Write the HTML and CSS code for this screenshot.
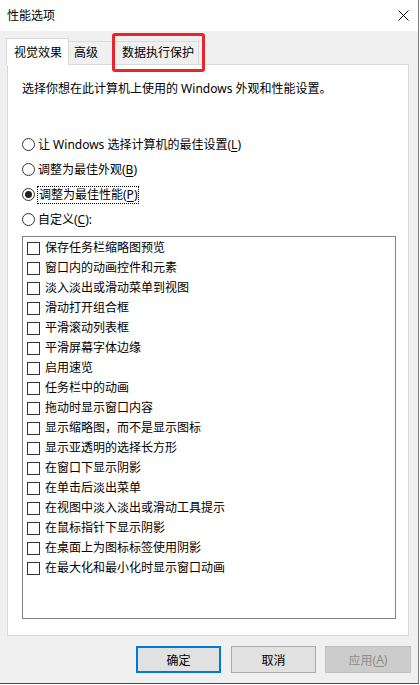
FILE: index.html
```html
<!DOCTYPE html>
<html lang="zh-CN">
<head>
<meta charset="utf-8">
<title>性能选项</title>
<link rel="stylesheet" href="styles.css">
</head>
<body>
<div class="window">
  <div class="titlebar">
    <span class="title">性能选项</span>
    <span class="close">
      <svg width="11" height="11" viewBox="0 0 11 11"><path d="M0.5 0.5 L10.5 10.5 M10.5 0.5 L0.5 10.5" stroke="#000" stroke-width="1" fill="none"/></svg>
    </span>
  </div>
  <div class="main">
    <div class="tabs">
      <div class="tab active">视觉效果</div>
      <div class="tab second">高级</div>
      <div class="tab third">数据执行保护<span class="highlight"></span></div>
    </div>
    <div class="panel">
      <p class="desc">选择你想在此计算机上使用的 Windows 外观和性能设置。</p>
      <div class="radios">
        <div class="radio-row"><span class="radio"></span><span class="label">让 Windows 选择计算机的最佳设置(<u>L</u>)</span></div>
        <div class="radio-row"><span class="radio"></span><span class="label">调整为最佳外观(<u>B</u>)</span></div>
        <div class="radio-row"><span class="radio checked"></span><span class="label focused">调整为最佳性能(<u>P</u>)</span></div>
        <div class="radio-row"><span class="radio"></span><span class="label">自定义(<u>C</u>):</span></div>
      </div>
      <div class="list">
        <div class="check-row"><span class="box"></span><span>保存任务栏缩略图预览</span></div>
        <div class="check-row"><span class="box"></span><span>窗口内的动画控件和元素</span></div>
        <div class="check-row"><span class="box"></span><span>淡入淡出或滑动菜单到视图</span></div>
        <div class="check-row"><span class="box"></span><span>滑动打开组合框</span></div>
        <div class="check-row"><span class="box"></span><span>平滑滚动列表框</span></div>
        <div class="check-row"><span class="box"></span><span>平滑屏幕字体边缘</span></div>
        <div class="check-row"><span class="box"></span><span>启用速览</span></div>
        <div class="check-row"><span class="box"></span><span>任务栏中的动画</span></div>
        <div class="check-row"><span class="box"></span><span>拖动时显示窗口内容</span></div>
        <div class="check-row"><span class="box"></span><span>显示缩略图，而不是显示图标</span></div>
        <div class="check-row"><span class="box"></span><span>显示亚透明的选择长方形</span></div>
        <div class="check-row"><span class="box"></span><span>在窗口下显示阴影</span></div>
        <div class="check-row"><span class="box"></span><span>在单击后淡出菜单</span></div>
        <div class="check-row"><span class="box"></span><span>在视图中淡入淡出或滑动工具提示</span></div>
        <div class="check-row"><span class="box"></span><span>在鼠标指针下显示阴影</span></div>
        <div class="check-row"><span class="box"></span><span>在桌面上为图标标签使用阴影</span></div>
        <div class="check-row"><span class="box"></span><span>在最大化和最小化时显示窗口动画</span></div>
      </div>
    </div>
    <div class="buttons">
      <button class="btn default">确定</button>
      <button class="btn cancel">取消</button>
      <button class="btn disabled">应用(<u>A</u>)</button>
    </div>
  </div>
</div>
</body>
</html>
```

FILE: styles.css
```css
* {
  box-sizing: border-box;
}

html, body {
  margin: 0;
  padding: 0;
}

body {
  width: 420px;
  height: 685px;
  background: #ffffff;
  font-family: "Noto Sans", "Noto Sans CJK SC", sans-serif;
  font-size: 12px;
  color: #000;
  overflow: hidden;
}

.window {
  width: 419px;
  height: 684px;
  background: #f0f0f0;
  border-right: 1px solid #7a7a7a;
  border-bottom: 1px solid #4a4a4a;
  display: flex;
  flex-direction: column;
}

.titlebar {
  flex: none;
  height: 31px;
  background: #ffffff;
  display: flex;
  align-items: center;
  justify-content: space-between;
  padding: 0 9px 0 7px;
}

.title {
  line-height: 18px;
}

.close {
  display: flex;
}

.main {
  flex: 1;
  display: flex;
  flex-direction: column;
  padding: 7px 9px 0 7px;
}

.tabs {
  position: relative;
  z-index: 1;
  height: 26px;
  display: flex;
  align-items: flex-end;
}

.tab {
  height: 23px;
  padding: 2px 6px 0 5px;
  line-height: 18px;
  background: #f0f0f0;
  border: 1px solid #d9d9d9;
  border-bottom: none;
  white-space: nowrap;
}

.tab.active {
  height: 27px;
  margin-bottom: -1px;
  margin-left: -1px;
  padding: 5px 6px 0 7px;
  background: #ffffff;
}

.tab.second {
  border-left: none;
  padding-right: 14px;
}

.tab.third {
  position: relative;
  border-left: none;
  padding-left: 9px;
  padding-right: 4px;
}

.highlight {
  position: absolute;
  left: -1px;
  top: -9px;
  width: 93px;
  height: 39px;
  border: 3px solid #e8242c;
  border-radius: 3px;
}

.panel {
  flex: none;
  height: 572px;
  background: #ffffff;
  border: 1px solid #d9d9d9;
  padding: 15px 13px 0 14px;
}

.desc {
  margin: 0;
  line-height: 18px;
}

.radios {
  margin-top: 34px;
  display: flex;
  flex-direction: column;
}

.radio-row {
  height: 25px;
  display: flex;
  align-items: center;
  gap: 3px;
  line-height: 18px;
}

.radio {
  flex: none;
  width: 13px;
  height: 13px;
  border: 1px solid #333;
  border-radius: 50%;
  background: #fff;
  display: flex;
  align-items: center;
  justify-content: center;
}

.radio.checked::after {
  content: "";
  width: 7px;
  height: 7px;
  border-radius: 50%;
  background: #222;
}

.label.focused {
  margin-left: -1px;
  padding: 0 1px;
  line-height: 16px;
  border: 1px dotted #000;
}

.list {
  margin-top: 4px;
  width: 374px;
  height: 383px;
  border: 1px solid #828282;
  background: #fff;
  padding: 1px 0 0 4px;
}

.check-row {
  height: 20px;
  display: flex;
  align-items: center;
  gap: 5px;
  line-height: 18px;
}

.box {
  flex: none;
  width: 13px;
  height: 13px;
  border: 1px solid #333;
  background: #fff;
}

.buttons {
  margin-top: 10px;
  margin-right: -2px;
  display: flex;
  justify-content: flex-end;
}

.btn {
  width: 85px;
  height: 27px;
  padding: 0;
  margin: 0;
  font-family: inherit;
  font-size: 12px;
  color: #000;
  background: #e1e1e1;
  border: 1px solid #adadad;
  display: flex;
  align-items: center;
  justify-content: center;
}

.btn.default {
  border: 2px solid #0078d7;
}

.btn.cancel {
  margin-left: 10px;
}

.btn.disabled {
  margin-left: 9px;
  width: 86px;
  background: #cccccc;
  border-color: #bfbfbf;
  color: #8d8d8d;
}

u {
  text-decoration: underline;
  text-underline-offset: 2px;
}
```
